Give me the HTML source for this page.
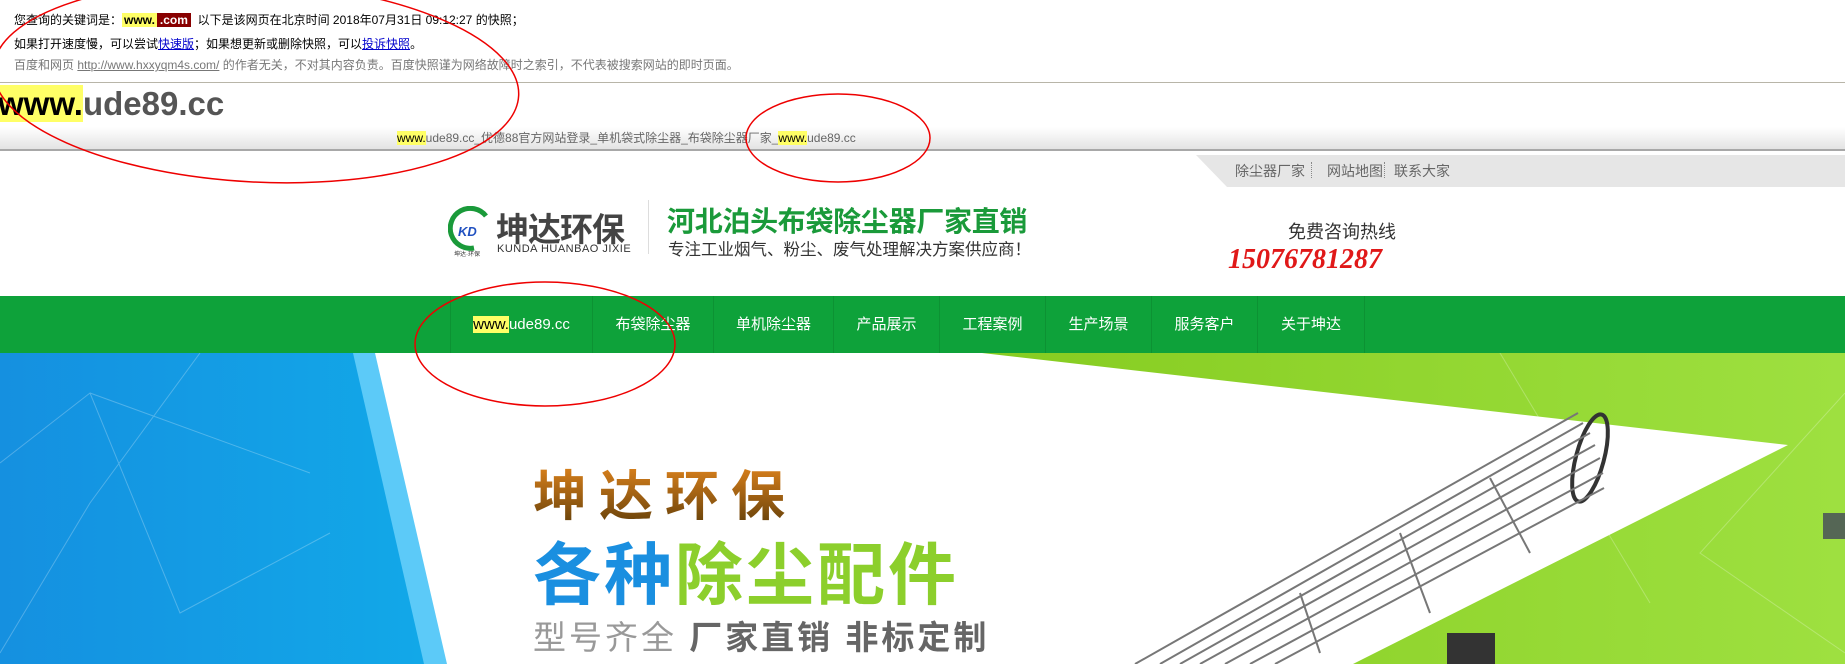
<!DOCTYPE html>
<html><head><meta charset="utf-8"><style>
*{margin:0;padding:0;box-sizing:border-box}
body{width:1845px;height:664px;overflow:hidden;position:relative;background:#fff;font-family:"Liberation Sans","Noto Sans CJK SC",sans-serif}
.a{position:absolute;white-space:nowrap}
.hl{background:#ffff66;color:#000}
.nav{position:absolute;left:0;top:296px;width:1845px;height:57px;background:#0ea23a}
.nav div{position:absolute;top:0;height:57px;line-height:57px;color:#fff;font-size:15px;text-align:center;border-right:1px solid #0c9233}
</style></head><body>
<div class="a" style="left:14px;top:11px;font-size:12px;color:#000">您查询的关键词是：<span class="hl" style="padding:0 2px;font-weight:bold">www.</span><span style="background:#880000;color:#fff;padding:0 3px;font-weight:bold">.com</span>&nbsp; 以下是该网页在北京时间 2018年07月31日 09:12:27 的快照；</div>
<div class="a" style="left:14px;top:35px;font-size:12px;color:#000">如果打开速度慢，可以尝试<u style="color:#00c">快速版</u>；如果想更新或删除快照，可以<u style="color:#00c">投诉快照</u>。</div>
<div class="a" style="left:14px;top:56px;font-size:12px;color:#777">百度和网页 <u>http://www.hxxyqm4s.com/</u> 的作者无关，不对其内容负责。百度快照谨为网络故障时之索引，不代表被搜索网站的即时页面。</div>
<div class="a" style="left:0;top:82px;width:1845px;height:1px;background:#b8b5a8"></div>
<div class="a" style="left:-2px;top:82px;height:41px;line-height:43px;font-size:33px;font-weight:bold;color:#555;letter-spacing:0"><span class="hl">www.</span>ude89.cc</div>
<div class="a" style="left:0;top:127px;width:1845px;height:23px;background:linear-gradient(#fff,#e2e2e2)"></div>
<div class="a" style="left:0;top:149px;width:1845px;height:2px;background:#a8a8a8"></div>
<div class="a" style="left:397px;top:129px;font-size:12px;color:#666"><span class="hl">www.</span>ude89.cc_优德88官方网站登录_单机袋式除尘器_布袋除尘器厂家_<span class="hl">www.</span>ude89.cc</div>

<svg class="a" style="left:1196px;top:155px" width="649" height="32"><polygon points="0,0 649,0 649,32 31,32" fill="#e6e6e6"/></svg>
<div class="a" style="left:1235px;top:161px;font-size:14px;color:#666">除尘器厂家</div>
<div class="a" style="left:1311px;top:162px;height:16px;border-left:1px dotted #888"></div>
<div class="a" style="left:1327px;top:161px;font-size:14px;color:#666">网站地图</div>
<div class="a" style="left:1384px;top:162px;height:16px;border-left:1px dotted #888"></div>
<div class="a" style="left:1394px;top:161px;font-size:14px;color:#666">联系大家</div>

<svg class="a" style="left:448px;top:206px" width="46" height="52"><path d="M38,10 A20,20 0 1 0 26,42" stroke="#1a9a3a" stroke-width="5" fill="none"/><text x="10" y="30" font-size="13" font-weight="bold" font-style="italic" fill="#2050c0" font-family="Liberation Sans">KD</text><text x="6" y="50" font-size="6" fill="#333">坤达·环保</text></svg>
<div class="a" style="left:496px;top:203px;font-size:33px;font-weight:bold;color:#444;letter-spacing:-1px">坤达环保</div>
<div class="a" style="left:497px;top:243px;font-size:11px;color:#333;letter-spacing:0.5px">KUNDA HUANBAO JIXIE</div>
<div class="a" style="left:648px;top:200px;width:1px;height:54px;background:#ddd"></div>
<div class="a" style="left:667px;top:200px;font-size:28px;font-weight:bold;color:#1a9a3a;letter-spacing:-0.3px">河北泊头布袋除尘器厂家直销</div>
<div class="a" style="left:668px;top:236px;font-size:16.5px;color:#333">专注工业烟气、粉尘、废气处理解决方案供应商！</div>
<div class="a" style="left:1288px;top:218px;font-size:18px;color:#333">免费咨询热线</div>
<div class="a" style="left:1228px;top:244px;font-size:28px;font-weight:bold;font-style:italic;color:#e01818;font-family:'Liberation Serif',serif">15076781287</div>

<div class="nav">
<div style="left:450px;width:143px;border-left:1px solid #0c9233"><span class="hl">www.</span>ude89.cc</div>
<div style="left:593px;width:121px">布袋除尘器</div>
<div style="left:714px;width:120px">单机除尘器</div>
<div style="left:834px;width:106px">产品展示</div>
<div style="left:940px;width:106px">工程案例</div>
<div style="left:1046px;width:106px">生产场景</div>
<div style="left:1152px;width:106px">服务客户</div>
<div style="left:1258px;width:107px">关于坤达</div>
</div>

<svg class="a" style="left:0;top:353px" width="1845" height="311">
<defs><linearGradient id="bl" x1="0" x2="1"><stop offset="0" stop-color="#1590e0"/><stop offset="1" stop-color="#12a8e8"/></linearGradient>
<linearGradient id="gr" x1="0" x2="1"><stop offset="0" stop-color="#86cc20"/><stop offset="1" stop-color="#9ee040"/></linearGradient></defs>
<rect width="1845" height="311" fill="#fff"/>
<polygon points="0,0 375,0 447,311 0,311" fill="#5ccaf8"/>
<polygon points="0,0 353,0 424,311 0,311" fill="url(#bl)"/>
<polygon points="982,0 1845,0 1845,311 1353,311 1788,92" fill="url(#gr)"/>
<g stroke="#ffffff" stroke-opacity="0.25" fill="none"><path d="M0,110 L90,40 L180,260 L330,180 M90,40 L310,120 M200,0 L90,150 L0,300 M1845,40 L1700,200 L1845,300 M1500,0 L1650,250"/></g>
<g stroke="#777" stroke-width="2" fill="none">
<ellipse cx="1590" cy="105" rx="14" ry="45" transform="rotate(15 1590 105)" stroke="#333" stroke-width="4"/>
<path d="M1578,60 L1135,311 M1583,70 L1160,311 M1590,80 L1180,311 M1595,92 L1200,311 M1600,105 L1225,311 M1603,120 L1250,311 M1604,135 L1275,311"/>
<path d="M1490,125 L1530,200 M1400,180 L1430,260 M1300,240 L1320,300"/>
</g>
<rect x="1447" y="280" width="48" height="31" fill="#333"/>
<rect x="1823" y="160" width="22" height="26" fill="#556655"/>
</svg>
<div class="a" style="left:533px;top:452px;font-size:54px;font-weight:bold;letter-spacing:12px;background:linear-gradient(#f59020,#5a3a08);-webkit-background-clip:text;color:transparent">坤达环保</div>
<div class="a" style="left:533px;top:520px;font-size:68px;font-weight:bold;letter-spacing:3px"><span style="color:#1a8fe0">各种</span><span style="color:#8ccf2c">除尘配件</span></div>
<div class="a" style="left:533px;top:611px;font-size:33px;letter-spacing:3px;color:#666"><span style="color:#999">型号齐全</span> <b>厂家直销 非标定制</b></div>

<svg class="a" style="left:0;top:0" width="1845" height="664" fill="none" stroke="#e00" stroke-width="1.5">
<ellipse cx="256" cy="82" rx="263" ry="100" transform="rotate(3 256 82)"/>
<ellipse cx="838" cy="138" rx="92" ry="44"/>
<ellipse cx="545" cy="344" rx="130" ry="62"/>
</svg>
</body></html>
